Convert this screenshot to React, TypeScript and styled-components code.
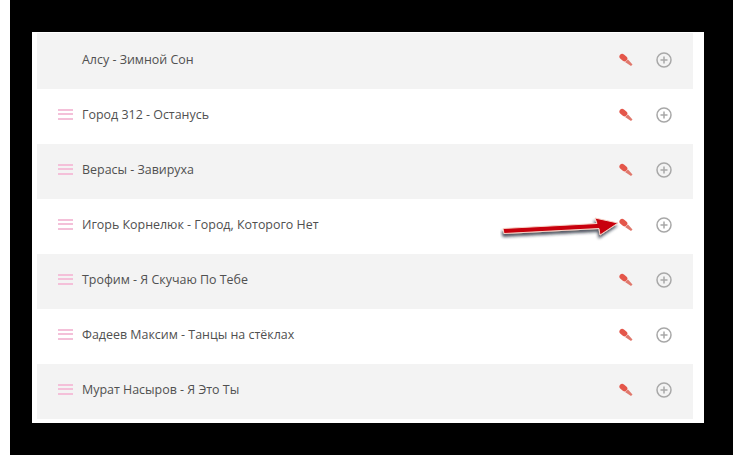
import styled, { createGlobalStyle } from "styled-components";

const GlobalStyle = createGlobalStyle`
  html, body {
    margin: 0;
    padding: 0;
    background: #fff;
  }
`;

const tracks = [
  { title: "Алсу - Зимной Сон", noHandle: true },
  { title: "Город 312 - Останусь" },
  { title: "Верасы - Завируха" },
  { title: "Игорь Корнелюк - Город, Которого Нет", arrow: true },
  { title: "Трофим - Я Скучаю По Тебе" },
  { title: "Фадеев Максим - Танцы на стёклах" },
  { title: "Мурат Насыров - Я Это Ты" },
];

const Mic = () => (
  <MicIcon viewBox="0 0 14 14">
    <path d="M3.200 3.600 5.600 5.600" stroke="#e4564a" strokeWidth="5.500" strokeLinecap="round" fill="none" />
    <path d="M6 9 9 6.500 13.500 11.500 12 13z" fill="#e0786c" />
  </MicIcon>
);

const Plus = () => (
  <PlusIcon viewBox="0 0 16 16">
    <circle cx="8" cy="8" r="7" fill="none" stroke="#a8a8a8" strokeWidth="1.500" />
    <path d="M8 4.500v7M4.500 8h7" stroke="#a8a8a8" strokeWidth="1.500" />
  </PlusIcon>
);

const Arrow = () => (
  <ArrowIcon viewBox="0 0 120 32">
    <defs>
      <filter id="arrowShadow" x="-10%" y="-40%" width="120%" height="200%">
        <feDropShadow dx="-1" dy="3" stdDeviation="1.500" floodColor="#1c2430" floodOpacity="0.75" />
      </filter>
    </defs>
    <path
      d="M3 17.500 97 12.500 95 7 118 12 100 24 99 17.500 4 22.500z"
      fill="#c8000c"
      stroke="#f6d3c8"
      strokeWidth="1"
      filter="url(#arrowShadow)"
    />
  </ArrowIcon>
);

export default function App() {
  return (
    <Frame>
      <GlobalStyle />
      <Panel>
        {tracks.map((t, i) => (
          <Row key={t.title} $shaded={i % 2 === 0} $first={i === 0}>
            <Handle $hidden={t.noHandle} />
            <Title>{t.title}</Title>
            <Actions>
              {t.arrow && <Arrow />}
              <Mic />
              <Plus />
            </Actions>
          </Row>
        ))}
      </Panel>
    </Frame>
  );
}

const Frame = styled.div`
  box-sizing: border-box;
  width: 723px;
  height: 455px;
  margin-left: 10px;
  padding: 32px 0 32px 22px;
  background: #000;
`;

const Panel = styled.div`
  box-sizing: border-box;
  width: 672px;
  height: 391px;
  padding: 1px 11px 0 5px;
  background: #fff;
`;

const Row = styled.div<{ $shaded: boolean; $first: boolean }>`
  box-sizing: border-box;
  display: flex;
  align-items: center;
  height: ${(p) => (p.$first ? "56px" : "55px")};
  padding: 0 0 ${(p) => (p.$first ? "3px" : "4px")} 21px;
  background: ${(p) => (p.$shaded ? "#f3f3f3" : "#fff")};
`;

const Handle = styled.span<{ $hidden?: boolean }>`
  box-sizing: border-box;
  width: 15px;
  height: 11px;
  margin-right: 9px;
  border-top: 2px solid #f4c0d9;
  border-bottom: 2px solid #f4c0d9;
  position: relative;
  visibility: ${(p) => (p.$hidden ? "hidden" : "visible")};

  &::after {
    content: "";
    position: absolute;
    left: 0;
    right: 0;
    top: 2px;
    height: 2px;
    background: #f4c0d9;
  }
`;

const Title = styled.span`
  flex: 1;
  font-family: "Open Sans", sans-serif;
  font-size: 12.45px;
  color: #505050;
`;

const Actions = styled.div`
  display: flex;
  align-items: center;
  gap: 23px;
  padding-right: 21px;
  position: relative;
`;

const MicIcon = styled.svg`
  width: 14px;
  height: 14px;
`;

const PlusIcon = styled.svg`
  width: 16px;
  height: 16px;
`;

const ArrowIcon = styled.svg`
  position: absolute;
  right: 73px;
  top: -6px;
  width: 120px;
  height: 32px;
`;
